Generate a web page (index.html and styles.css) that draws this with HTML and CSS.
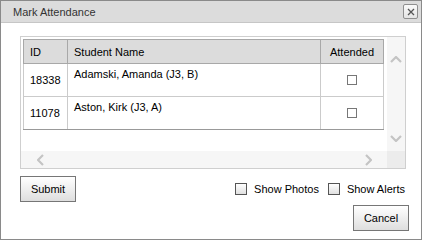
FILE: index.html
```html
<!DOCTYPE html>
<html lang="en">

<head>
    <meta charset="UTF-8">
    <title>Mark Attendance</title>
    <link rel="stylesheet" href="styles.css">
</head>

<body>
    <div class="dialog">
        <!-- Title bar -->
        <div class="title-bar">
            <span class="title">Mark Attendance</span>
            <button class="close-btn" title="Close">
                <svg width="8" height="8" viewBox="0 0 8 8">
                    <path d="M1 1L7 7M7 1L1 7" stroke="#555" stroke-width="1.3" fill="none" />
                </svg>
            </button>
        </div>

        <div class="dialog-body">
            <!-- Scrollable grid -->
            <div class="scroll-box">
                <div class="scroll-content">
                    <table class="grid">
                        <thead>
                            <tr>
                                <th class="col-id">ID</th>
                                <th class="col-name">Student Name</th>
                                <th class="col-att">Attended</th>
                            </tr>
                        </thead>
                        <tbody>
                            <tr>
                                <td class="col-id">18338</td>
                                <td class="col-name">Adamski, Amanda (J3, B)</td>
                                <td class="col-att"><span class="cell-check"></span></td>
                            </tr>
                            <tr>
                                <td class="col-id">11078</td>
                                <td class="col-name">Aston, Kirk (J3, A)</td>
                                <td class="col-att"><span class="cell-check"></span></td>
                            </tr>
                        </tbody>
                    </table>
                </div>
                <div class="vbar">
                    <svg width="12" height="7" viewBox="0 0 12 7">
                        <path d="M1 6L6 1L11 6" stroke="#c4c4c4" stroke-width="2.2" fill="none" />
                    </svg>
                    <svg width="12" height="7" viewBox="0 0 12 7">
                        <path d="M1 1L6 6L11 1" stroke="#c4c4c4" stroke-width="2.2" fill="none" />
                    </svg>
                </div>
                <div class="hbar">
                    <svg width="7" height="12" viewBox="0 0 7 12">
                        <path d="M6 1L1 6L6 11" stroke="#c4c4c4" stroke-width="2.2" fill="none" />
                    </svg>
                    <svg width="7" height="12" viewBox="0 0 7 12">
                        <path d="M1 1L6 6L1 11" stroke="#c4c4c4" stroke-width="2.2" fill="none" />
                    </svg>
                </div>
                <div class="corner"></div>
            </div>

            <!-- Footer -->
            <div class="footer">
                <button class="btn submit-btn">Submit</button>
                <div class="footer-right">
                    <div class="options">
                        <label class="option"><span class="box"></span>Show Photos</label>
                        <label class="option"><span class="box"></span>Show Alerts</label>
                    </div>
                    <button class="btn cancel-btn">Cancel</button>
                </div>
            </div>
        </div>
    </div>
</body>

</html>
```

FILE: styles.css
```css
* {
    margin: 0;
    padding: 0;
    box-sizing: border-box;
    font-family: 'Liberation Sans', Arial, sans-serif;
}

body {
    width: 422px;
    height: 240px;
    background-color: white;
    overflow: hidden;
}

.dialog {
    width: 422px;
    height: 240px;
    border: 1px solid #8a8a8a;
    display: flex;
    flex-direction: column;
}

/* Title bar */
.title-bar {
    height: 22px;
    background-color: #dcdcdc;
    border-bottom: 1px solid #c6c6c6;
    display: flex;
    align-items: center;
    justify-content: space-between;
    padding: 0 3px 0 12px;
}

.title {
    font-size: 11px;
    color: #333;
}

.close-btn {
    width: 15px;
    height: 15px;
    border: 1px solid #8f8f8f;
    border-radius: 2px;
    background: linear-gradient(#fafafa, #e4e4e4);
    display: flex;
    align-items: center;
    justify-content: center;
}

.dialog-body {
    padding: 13px 15px 0 19px;
}

/* Scroll box */
.scroll-box {
    width: 386px;
    height: 133px;
    border: 1px solid #cfcfcf;
    display: grid;
    grid-template-columns: 366px 18px;
    grid-template-rows: 114px 17px;
}

.scroll-content {
    padding: 2px 0 0 2px;
    overflow: hidden;
}

.grid {
    width: 361px;
    border-collapse: collapse;
    border: 1px solid #999;
    font-size: 11px;
    color: #000;
}

.grid th {
    height: 24px;
    background-color: #dcdcdc;
    font-weight: normal;
    text-align: left;
    padding: 0 6px;
    border: 1px solid #a8a8a8;
}

.grid td {
    height: 33px;
    border: 1px solid #cbcbcb;
    padding: 0 6px;
}

.grid tr:last-child td {
    border-bottom-color: #999;
}

.col-id {
    width: 44px;
}

.grid td.col-name {
    vertical-align: top;
    padding-top: 4px;
}

.grid th.col-att,
.grid td.col-att {
    width: 63px;
    text-align: center;
}

.cell-check {
    display: inline-block;
    width: 10px;
    height: 10px;
    border: 1px solid #777;
    background-color: white;
    vertical-align: middle;
    margin-top: -2px;
}

.vbar {
    background-color: #f6f6f6;
    display: flex;
    flex-direction: column;
    align-items: center;
    justify-content: space-between;
    padding: 19px 0 9px;
}

.hbar {
    background-color: #f6f6f6;
    display: flex;
    align-items: center;
    justify-content: space-between;
    padding: 0 15px 0 16px;
}

.corner {
    background-color: #ececec;
}

/* Footer */
.footer {
    display: flex;
    justify-content: space-between;
    align-items: flex-start;
    margin-top: 7px;
}

.btn {
    height: 26px;
    border: 1px solid #767676;
    background: linear-gradient(#ffffff, #dedede);
    font-size: 11px;
    color: #000;
    cursor: pointer;
}

.submit-btn {
    width: 56px;
}

.footer-right {
    display: flex;
    flex-direction: column;
    align-items: flex-end;
    margin-top: 5px;
    margin-right: -3px;
}

.options {
    display: flex;
    gap: 9px;
    height: 16px;
    align-items: center;
    margin-right: 4px;
}

.option {
    display: flex;
    align-items: center;
    font-size: 11px;
    color: #000;
}

.box {
    width: 12px;
    height: 12px;
    border: 1px solid #555;
    background: linear-gradient(#ffffff, #e0e0e0);
    margin-right: 7px;
}

.cancel-btn {
    width: 56px;
    margin-top: 8px;
}
```
